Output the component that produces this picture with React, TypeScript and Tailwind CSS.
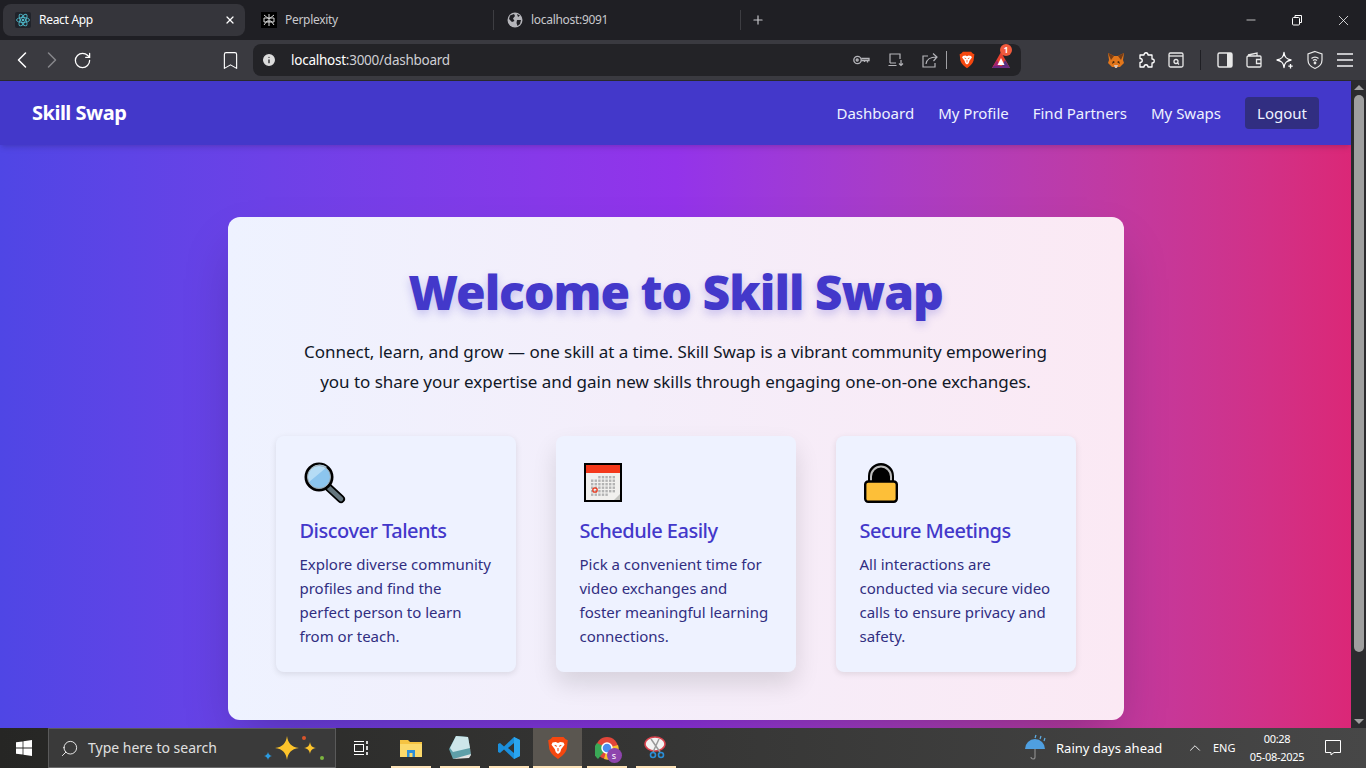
import { ChevronLeft, ChevronRight, RotateCw, Bookmark, Info, X, Plus, Minus, ChevronUp, Search } from 'lucide-react';

const features = [
  { title: 'Discover Talents', text: ['Explore diverse community', 'profiles and find the', 'perfect person to learn', 'from or teach.'], icon: <Magnifier />, iconClass: 'pl-[2px] pt-0', shadow: 'shadow-[0_2px_6px_rgba(0,0,0,0.1)]' },
  { title: 'Schedule Easily', text: ['Pick a convenient time for', 'video exchanges and', 'foster meaningful learning', 'connections.'], icon: <CalendarIcon />, iconClass: 'pl-[4px] pt-[3px]', shadow: 'shadow-[0_12px_24px_rgba(0,0,0,0.12)]' },
  { title: 'Secure Meetings', text: ['All interactions are', 'conducted via secure video', 'calls to ensure privacy and', 'safety.'], icon: <LockIcon />, iconClass: 'pl-[4px] pt-[2px]', shadow: 'shadow-[0_2px_6px_rgba(0,0,0,0.1)]' },
];

function Magnifier() {
  return (
    <svg width="44" height="44" viewBox="0 0 44 44">
      <path d="M25 26 L39 39" stroke="#000" strokeWidth="8" strokeLinecap="round" />
      <path d="M27 28 L39 39" stroke="#64757d" strokeWidth="4.5" strokeLinecap="round" />
      <circle cx="17" cy="17" r="13" fill="#8cc5ee" stroke="#000" strokeWidth="3" />
      <path d="M7 22 A12 12 0 0 1 25 7 Z" fill="#b5dcf5" />
      <circle cx="17" cy="17" r="11.5" fill="none" stroke="#9fa8ad" strokeWidth="1" />
    </svg>
  );
}

function CalendarIcon() {
  const cells = [];
  for (let r = 0; r < 6; r++) {
    for (let c = 0; c < 7; c++) {
      if ((r === 0 && c < 2) || (r === 5 && c > 4)) continue;
      cells.push(<rect key={r + '-' + c} x={7 + c * 3.6} y={13 + r * 3.5} width="2.4" height="2.4" fill="#b3b3b3" />);
    }
  }
  return (
    <svg width="38" height="39" viewBox="0 0 38 39">
      <rect width="38" height="39" fill="#000" />
      <rect x="2" y="2" width="34" height="35" fill="#f1f0ee" />
      <rect x="2" y="2" width="34" height="8" fill="#f4381a" />
      {cells}
      <circle cx="11" cy="27" r="2.2" fill="none" stroke="#ec3a1e" strokeWidth="1.3" />
      <path d="M36 31 L30 37 H36 Z" fill="#c4c4c0" />
    </svg>
  );
}

function LockIcon() {
  return (
    <svg width="34" height="41" viewBox="0 0 34 41">
      <path d="M5 20 V14 A12 12 0 0 1 29 14 V20 Z" fill="#000" />
      <path d="M5.5 20 V14 A11.5 11.5 0 0 1 28.5 14 V20" fill="none" stroke="#000" strokeWidth="3" />
      <path d="M7 20 V14.5 A10 10 0 0 1 27 14.5 V20" fill="none" stroke="#bdbdbd" strokeWidth="2" />
      <rect x="1.2" y="19.5" width="31.6" height="20.3" rx="3" fill="#fdbf38" stroke="#000" strokeWidth="2.4" />
    </svg>
  );
}

function BraveLogo({ size = 18 }: { size?: number }) {
  return (
    <svg width={size} height={size} viewBox="0 0 20 22">
      <path d="M5 1 H15 L17 3 L19 4 L18 12 C17 16 13 19 10 21 C7 19 3 16 2 12 L1 4 L3 3 Z" fill="#f5470f" />
      <path d="M5 6 L8 5.5 L10 6.5 L12 5.5 L15 6 L16 8 L13 12 L12 15 L10 16.5 L8 15 L7 12 L4 8 Z" fill="#fff" />
      <path d="M7 8.5 L9 9.5 M13 8.5 L11 9.5 M10 11 V14" stroke="#f5470f" strokeWidth="1" fill="none" />
    </svg>
  );
}

function BatLogo() {
  return (
    <span className="relative flex w-[18px] h-[18px]">
      <svg width="18" height="18" viewBox="0 0 18 18">
        <path d="M9 1 L18 17 H0 Z" fill="#e8412f" />
        <path d="M0 17 L5 9 L9 17 Z" fill="#a3236f" />
        <path d="M18 17 L13 9 L9 17 Z" fill="#56307f" />
        <path d="M0 17 H18 L16 15 H2 Z" fill="#6a2a80" />
        <path d="M9 7 L12.5 14 H5.5 Z" fill="#fff" />
      </svg>
      <span className="absolute -top-[7px] left-[8px] w-3 h-3 rounded-full bg-[#f05a3c] text-white text-[8px] leading-3 text-center font-bold">1</span>
    </span>
  );
}

function Fox() {
  return (
    <svg width="18" height="17" viewBox="0 0 18 17">
      <path d="M1 1 L7 4 H11 L17 1 L16 8 L17 11 L13 15 H5 L1 11 L2 8 Z" fill="#e2761b" />
      <path d="M6 9 L8 10 L5 12 Z M12 9 L10 10 L13 12 Z" fill="#33210f" />
      <path d="M7 13 H11 L10 16 H8 Z" fill="#d7c1b3" />
      <path d="M1 1 L7 4 L4 8 Z M17 1 L11 4 L14 8 Z" fill="#763d16" />
    </svg>
  );
}

function TabClip({ children }: { children: React.ReactNode }) {
  return <span className="flex items-center justify-center w-4 h-4 shrink-0">{children}</span>;
}

function TaskIcon({ children, active }: { children: React.ReactNode; active?: boolean }) {
  return (
    <div className={'relative flex items-center justify-center h-10 w-[49px] ' + (active ? 'bg-[#5a5650]' : '')}>
      {children}
      <span className={'absolute bottom-0 h-[2px] bg-[#fde3b8] ' + (active ? 'left-0 right-0' : 'left-[5px] right-[4px]')} />
    </div>
  );
}

export default function App() {
  return (
    <div className="flex flex-col w-[1366px] h-[768px] overflow-hidden font-['Noto_Sans','Open_Sans',sans-serif] bg-[#1f1f24]">
      {/* tab strip */}
      <div className="flex items-center h-10 shrink-0 bg-[#1f1f24] text-[#d6d6da] text-xs pl-[3px]">
        <div className="flex items-center w-[242px] h-8 rounded-lg bg-[#35353b] pl-3 pr-[9px] text-white">
          <TabClip>
            <svg width="16" height="16" viewBox="0 0 16 16" fill="none" stroke="#4fb8c9" strokeWidth="0.9">
              <rect width="16" height="16" rx="2" fill="#20232a" stroke="none" />
              <ellipse cx="8" cy="8" rx="6.5" ry="2.5" />
              <ellipse cx="8" cy="8" rx="6.5" ry="2.5" transform="rotate(60 8 8)" />
              <ellipse cx="8" cy="8" rx="6.5" ry="2.5" transform="rotate(120 8 8)" />
              <circle cx="8" cy="8" r="1.3" fill="#4fb8c9" stroke="none" />
            </svg>
          </TabClip>
          <span className="ml-2 flex-1 tracking-[-0.3px]">React App</span>
          <X size={12} strokeWidth={2.5} />
        </div>
        <div className="flex items-center w-[248px] pl-[16px]">
          <TabClip>
            <svg width="16" height="16" viewBox="0 0 16 16" fill="none" stroke="#d8d8d8" strokeWidth="1">
              <rect width="16" height="16" fill="#000" stroke="none" />
              <path d="M8 2 V14 M3 3 L8 7 L13 3 M3 13 L6 9 H10 L13 13 M3 6 H13 V10 H3 Z" />
            </svg>
          </TabClip>
          <span className="ml-2 tracking-[-0.3px] text-[#c8c8cc]">Perplexity</span>
        </div>
        <div className="flex items-center w-[247px] h-5 border-l border-[#3d3d42] pl-[13px]">
          <svg width="16" height="16" viewBox="0 0 16 16">
            <circle cx="8" cy="8" r="7.5" fill="#b5b5ba" />
            <path d="M3 3.5 L7 2 L8 4 L6 6.5 L7.5 9 L5 10 L2 7 Z M10 8 L14 8 L13 12 L10.5 14 L9.5 11 Z M10 2 L13 3.5 L11 5 Z" fill="#1f1f24" />
          </svg>
          <span className="ml-2 tracking-[-0.3px] text-[#c8c8cc]">localhost:9091</span>
        </div>
        <div className="flex items-center h-5 border-l border-[#3d3d42] pl-[10px]">
          <Plus size={14} className="text-[#c8c8cc]" />
        </div>
        <div className="ml-auto flex items-center text-white">
          <span className="w-[46px] flex justify-center"><Minus size={14} strokeWidth={1.2} /></span>
          <span className="w-[46px] flex justify-center">
            <svg width="12" height="12" viewBox="0 0 12 12" fill="none" stroke="#fff" strokeWidth="1">
              <rect x="1.5" y="3.5" width="7" height="7.5" rx="1" />
              <path d="M4 3.5 V1.5 H10.5 V8.5 H8.5" />
            </svg>
          </span>
          <span className="w-[46px] flex justify-center"><X size={17} strokeWidth={1.1} /></span>
        </div>
      </div>

      {/* toolbar */}
      <div className="flex items-center h-[41px] shrink-0 bg-[#3a3a40] border-b border-[#2a2a2e] text-white">
        <span className="w-[44px] flex justify-center"><ChevronLeft size={28} strokeWidth={1.3} className="shrink-0" /></span>
        <span className="w-[16px] flex justify-center text-[#85858a]"><ChevronRight size={28} strokeWidth={1.3} className="shrink-0" /></span>
        <span className="w-[44px] flex justify-center"><RotateCw size={19} strokeWidth={1.6} /></span>
        <span className="ml-[104px] w-[44px] flex justify-center"><Bookmark size={21} strokeWidth={1.3} /></span>
        <div className="flex items-center ml-[1px] w-[768px] h-8 rounded-lg bg-[#232327] pl-2 text-[13.5px]">
          <Info size={16} className="fill-[#dcdcdc] text-[#232327]" />
          <span className="ml-[14px] tracking-[-0.25px]">localhost<span className="text-[#cfcfd4]">:3000/dashboard</span></span>
          <span className="ml-auto flex items-center text-[#b5b5ba]">
            <svg width="17" height="10" viewBox="0 0 17 10" fill="none" stroke="#b5b5ba" strokeWidth="1.3">
              <circle cx="4.5" cy="5" r="3.7" />
              <circle cx="4.2" cy="5" r="1" />
              <path d="M8.2 3.5 H16 V5.5 H14.5 V7.5 M11.5 5.5 V7 M8.2 5.5 H14.5" />
            </svg>
            <span className="ml-[18px]">
              <svg width="16" height="14" viewBox="0 0 16 14" fill="none" stroke="#b5b5ba" strokeWidth="1.2"><path d="M2 10 V1 H12 V6 M0.5 12.5 H8.5 M2 10 H8 M13 7 V12.5 M11 10.5 L13 12.5 L15 10.5" /></svg>
            </span>
            <span className="ml-[18px]">
              <svg width="16" height="16" viewBox="0 0 16 16" fill="none" stroke="#b5b5ba" strokeWidth="1.2"><path d="M6 4 H1 V15 H13 V11" /><path d="M4 12 C4.5 7.5 8 5 14.5 5 M11 1.5 L15 5 L11.5 9" /></svg>
            </span>
            <span className="ml-[8px] h-[18px] border-l border-[#a0a0a4]" />
            <span className="ml-[11px] flex"><BraveLogo /></span>
            <span className="ml-[16px] mr-[11px]"><BatLogo /></span>
          </span>
        </div>
        <span className="ml-[86px] flex"><Fox /></span>
        <span className="ml-[13px] flex">
          <svg width="18" height="18" viewBox="0 0 18 18" fill="none" stroke="#fff" strokeWidth="1.3" strokeLinejoin="round"><path d="M6 4 C6 1 10 1 10 4 H14 V8 C17 8 17 12 14 12 V16 H10 C10 13 6 13 6 16 H2 V11.5 C5 11.5 5 7.5 2 7.5 V4 Z" /></svg>
        </span>
        <span className="ml-[11px] flex">
          <svg width="18" height="18" viewBox="0 0 18 18" fill="none" stroke="#e8e8e8" strokeWidth="1.3"><rect x="2" y="2" width="14" height="14" rx="1.5" /><path d="M2 5 H16" /><circle cx="9" cy="10.5" r="2" /><path d="M10.5 12 L12 13.5" /></svg>
        </span>
        <span className="ml-[15px] h-5 border-l border-[#1f1f24]" />
        <span className="ml-[15px] flex">
          <svg width="18" height="18" viewBox="0 0 18 18"><rect x="2" y="2" width="14" height="14" rx="1.5" fill="none" stroke="#e8e8e8" strokeWidth="1.4" /><rect x="11" y="2" width="5" height="14" fill="#e8e8e8" /></svg>
        </span>
        <span className="ml-[11px] flex">
          <svg width="18" height="18" viewBox="0 0 18 18" fill="none" stroke="#e8e8e8" strokeWidth="1.3"><path d="M3 4 L12 2 V5 M2 6 A1.5 1.5 0 0 1 3.5 5 H15 A1 1 0 0 1 16 6 V15 A1 1 0 0 1 15 16 H3.5 A1.5 1.5 0 0 1 2 14.5 Z" /><path d="M16 8.5 H11.5 V12.5 H16" /></svg>
        </span>
        <span className="ml-[13px] flex">
          <svg width="18" height="18" viewBox="0 0 18 18" fill="none" stroke="#fff" strokeWidth="1.3" strokeLinejoin="round"><path d="M8 1.5 C8.5 6 10 8 15 9 C10 10 8.5 12 8 16.5 C7.5 12 6 10 1 9 C6 8 7.5 6 8 1.5 Z" /><path d="M14.5 13 V17.5 M12.3 15.2 H16.7" /></svg>
        </span>
        <span className="ml-[12px] flex">
          <svg width="18" height="20" viewBox="0 0 18 20" fill="none" stroke="#e8e8e8" strokeWidth="1.2"><path d="M9 1.5 L16 4 V10 C16 14 13 17 9 18.5 C5 17 2 14 2 10 V4 Z" /><path d="M5.5 8.5 A5 5 0 0 1 12.5 8.5 M7 10.5 A3 3 0 0 1 11 10.5" /><circle cx="9" cy="13" r="0.8" fill="#e8e8e8" /></svg>
        </span>
        <span className="ml-[13px] flex flex-col gap-[4px] w-[16px]">
          <span className="h-[2px] bg-[#c4c4c8]" />
          <span className="h-[2px] bg-[#c4c4c8]" />
          <span className="h-[2px] bg-[#c4c4c8]" />
        </span>
      </div>

      {/* page and scrollbar */}
      <div className="flex flex-1 min-h-0">
        <div className="flex flex-col flex-1 min-w-0">
          <nav className="relative z-10 flex items-center justify-between h-16 shrink-0 pl-8 pr-8 bg-[#4338ca] text-white shadow-md">
            <span className="text-xl font-bold tracking-[-0.5px]">Skill Swap</span>
            <div className="flex items-center gap-6 text-[15px] text-[#eef2ff]">
              <span>Dashboard</span>
              <span>My Profile</span>
              <span>Find Partners</span>
              <span>My Swaps</span>
              <span className="w-[74px] h-8 flex items-center justify-center rounded bg-[#312e81]">Logout</span>
            </div>
          </nav>
          <main className="flex-1 min-h-0 pt-[72px] bg-gradient-to-r from-[#4f46e5] via-[#9333ea] to-[#db2777]">
            <div className="mx-auto w-[896px] h-[503px] rounded-xl px-12 pt-[45px] bg-gradient-to-r from-[#eef2ff] to-[#fbe9f4] shadow-2xl">
              <h1 className="text-center text-5xl leading-[60px] font-black text-[#4338ca] [text-shadow:0_4px_8px_rgba(67,56,202,0.25)] tracking-[-1.03px]">Welcome to Skill Swap</h1>
              <p className="mt-[15px] text-center text-[17px] leading-[30px] text-[#111827] tracking-[-0.03px]">
                Connect, learn, and grow — one skill at a time. Skill Swap is a vibrant community empowering<br />
                you to share your expertise and gain new skills through engaging one-on-one exchanges.
              </p>
              <div className="grid grid-cols-3 gap-10 mt-[39px]">
                {features.map((f) => (
                  <div key={f.title} className={'h-[236px] rounded-lg bg-[#eef2ff] p-6 ' + f.shadow}>
                    <div className="h-12 mb-[9px]">
                      <div className={f.iconClass}>{f.icon}</div>
                    </div>
                    <h3 className="text-xl leading-7 font-medium text-[#4338ca] tracking-[-0.5px]">{f.title}</h3>
                    <p className="mt-[7px] text-[15px] leading-6 text-[#312e81]">
                      {f.text.map((line) => (
                        <span key={line} className="block whitespace-nowrap">{line}</span>
                      ))}
                    </p>
                  </div>
                ))}
              </div>
            </div>
          </main>
        </div>
        <div className="flex flex-col items-center justify-between w-[15px] shrink-0 bg-[#2b2b2e] py-[4px]">
          <span className="w-0 h-0 border-x-[5px] border-x-transparent border-b-[5px] border-b-[#9f9f9f]" />
          <span className="w-[10px] h-[557px] mt-[5px] mb-auto rounded-full bg-[#9f9f9f]" />
          <span className="w-0 h-0 border-x-[5px] border-x-transparent border-t-[5px] border-t-[#9f9f9f]" />
        </div>
      </div>

      {/* taskbar */}
      <div className="flex items-center h-10 shrink-0 bg-gradient-to-r from-[#262624] to-[#474747] text-white text-sm">
        <span className="w-12 flex justify-center">
          <svg width="16" height="16" viewBox="0 0 16 16" fill="#fff"><path d="M0 2.3 L6.6 1.4 V7.6 H0 Z M7.4 1.3 L16 0 V7.6 H7.4 Z M0 8.4 H6.6 V14.6 L0 13.7 Z M7.4 8.4 H16 V16 L7.4 14.7 Z" /></svg>
        </span>
        <div className="flex items-center w-[288px] h-full bg-[#3a3a3a] border border-[#5a5a5a] border-b-[#6a6a6a] pl-[11px]">
          <Search size={19} strokeWidth={1.1} className="-scale-x-100" />
          <span className="ml-[9px] text-[#e0e0e0]">Type here to search</span>
          <span className="ml-auto mr-[9px] flex">
            <svg width="62" height="32" viewBox="0 0 62 32">
              <path d="M23 4 C24 11 27 15 35 16 C27 17 24 21 23 28 C22 21 19 17 11 16 C19 15 22 11 23 4 Z" fill="#fdc42b" />
              <path d="M46 10 C46.5 13.5 48 15.5 52 16 C48 16.5 46.5 18.5 46 22 C45.5 18.5 44 16.5 40 16 C44 15.5 45.5 13.5 46 10 Z" fill="#fdc42b" />
              <path d="M4 20 C4.5 22 5.5 23.5 8 24 C5.5 24.5 4.5 26 4 28 C3.5 26 2.5 24.5 0 24 C2.5 23.5 3.5 22 4 20 Z" fill="#2c9be0" />
              <circle cx="40" cy="6" r="2" fill="#d9542b" />
              <circle cx="58" cy="26" r="2" fill="#7db53f" />
            </svg>
          </span>
        </div>
        <span className="ml-[15px] w-[20px] flex justify-center">
          <svg width="16" height="16" viewBox="0 0 16 16" fill="none" stroke="#fff" strokeWidth="1"><rect x="1.5" y="4.5" width="9" height="7" /><path d="M1 1.5 H11 M1 14.5 H11" /><path d="M14 1 V4 M14 6 V10 M14 12 V15" strokeWidth="1.6" /></svg>
        </span>
        <div className="flex items-center ml-[15px]">
          <TaskIcon>
            <svg width="24" height="22" viewBox="0 0 24 22"><path d="M1 3 H9 L11 5 H23 V20 H1 Z" fill="#f5c342" /><path d="M1 7 H23 V20 H1 Z" fill="#fbd96b" /><path d="M8 13 H16 V20 H8 Z" fill="#2e8fd8" /><rect x="10.5" y="16" width="3" height="4" fill="#fbd96b" /></svg>
          </TaskIcon>
          <TaskIcon>
            <svg width="24" height="26" viewBox="0 0 24 26"><path d="M8 1 L20 2 L23 20 L5 24 L1 14 Z" fill="#5f9fa8" /><path d="M8 1 L20 2 L22 13 L5 17 L2 13 Z" fill="#cde6ea" /><path d="M20 2 L23 20 L21 23 L5 24 L23 19 Z" fill="#e4e4e4" /></svg>
          </TaskIcon>
          <TaskIcon>
            <svg width="24" height="24" viewBox="0 0 24 24"><path d="M17 1 L23 4 V20 L17 23 L7 13.5 L3 17 L1 16 V8 L3 7 L7 10.5 Z M17 7 L11 12 L17 17 Z" fill="#1b8fdb" /><path d="M17 1 L23 4 V20 L17 23 Z" fill="#2aa5ee" /></svg>
          </TaskIcon>
          <TaskIcon active>
            <BraveLogo size={24} />
          </TaskIcon>
          <TaskIcon>
            <span className="relative flex">
              <svg width="24" height="24" viewBox="0 0 24 24">
                <circle cx="12" cy="12" r="11" fill="#e2463a" />
                <path d="M12 12 L3 23 A11 11 0 0 1 2 7 Z" fill="#3aa856" />
                <path d="M12 12 L23 9 A11 11 0 0 1 9 23 Z" fill="#f9c02d" />
                <circle cx="12" cy="12" r="5" fill="#4a8df0" stroke="#fff" strokeWidth="1.5" />
              </svg>
              <span className="absolute -right-[3px] -bottom-[3px] w-[15px] h-[15px] rounded-full bg-[#8e44ad] text-[9px] leading-[15px] text-center">s</span>
            </span>
          </TaskIcon>
          <TaskIcon>
            <svg width="26" height="26" viewBox="0 0 26 26" fill="none"><ellipse cx="12" cy="9" rx="10" ry="7" fill="#f3f3f3" stroke="#d9434e" strokeWidth="1.5" /><path d="M8 4 L17 17 M16 4 L10 17" stroke="#9a9a9a" strokeWidth="1.5" /><circle cx="18" cy="20" r="2.5" stroke="#2a8fd8" strokeWidth="1.6" /><circle cx="10" cy="20" r="2.5" stroke="#2a8fd8" strokeWidth="1.6" /></svg>
          </TaskIcon>
        </div>
        <div className="ml-auto flex items-center">
          <svg width="24" height="28" viewBox="0 0 24 28" fill="none">
            <path d="M1 15 A10 10 0 0 1 21 15 Z" fill="#4f9fe0" />
            <path d="M11 15 V23 A2 2 0 0 1 7 23" stroke="#8a8a8a" strokeWidth="1.2" />
            <path d="M12 1 L11 4 M17 2 L16 5 M21 4 L20 7" stroke="#5fb0e8" strokeWidth="1.2" />
          </svg>
          <span className="ml-[8px] text-[13px] w-[107px]">Rainy days ahead</span>
          <ChevronUp size={18} strokeWidth={1.2} className="ml-[23px]" />
          <span className="ml-[9px] w-[24px] text-[11px]">ENG</span>
          <div className="w-[78px] ml-[1px] flex flex-col items-center text-[11px] leading-[18px] tracking-[-0.3px]">
            <span>00:28</span>
            <span>05-08-2025</span>
          </div>
          <span className="ml-[9px] mr-[25px]">
            <svg width="16" height="16" viewBox="0 0 16 16" fill="none" stroke="#fff" strokeWidth="1"><path d="M0.5 0.5 H15.5 V12.5 H9 L6 15 V12.5 H0.5 Z" /></svg>
          </span>
        </div>
      </div>
    </div>
  );
}
